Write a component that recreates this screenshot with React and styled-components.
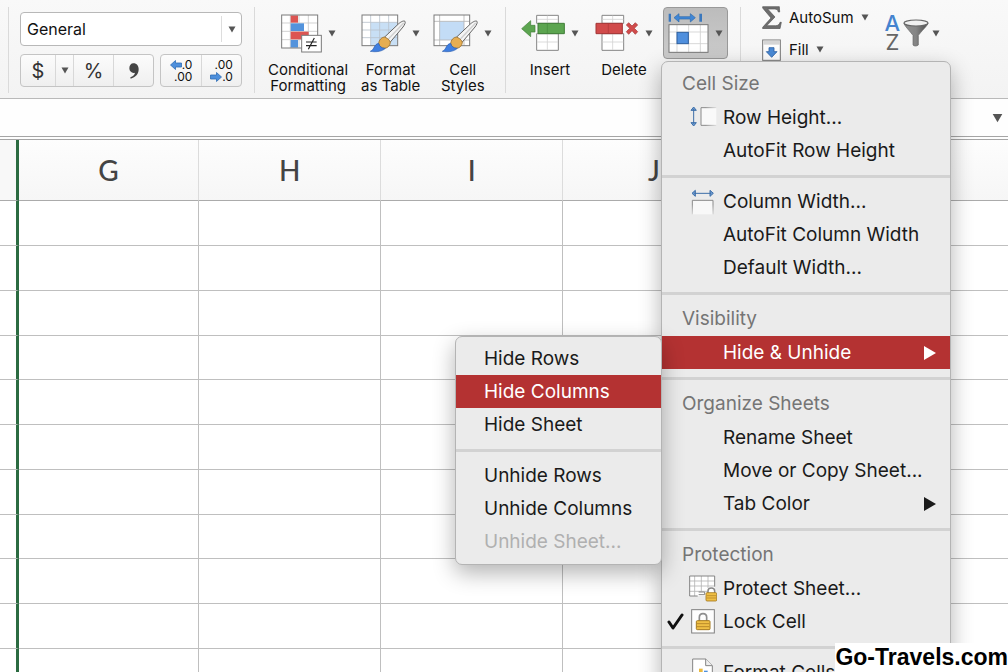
import { useState } from "react";
import styled, { createGlobalStyle } from "styled-components";

const COLUMNS = ["G", "H", "I", "J", "K", "L"];
const ROWS = Array.from({ length: 12 }, (_, i) => i);

const HIDE_MENU = [
  { label: "Hide Rows" },
  { label: "Hide Columns" },
  { label: "Hide Sheet" },
  { separator: true },
  { label: "Unhide Rows" },
  { label: "Unhide Columns" },
  { label: "Unhide Sheet...", disabled: true },
];

const FORMAT_MENU = [
  { title: "Cell Size" },
  { label: "Row Height...", icon: <RowHeightIcon /> },
  { label: "AutoFit Row Height" },
  { separator: true },
  { label: "Column Width...", icon: <ColumnWidthIcon /> },
  { label: "AutoFit Column Width" },
  { label: "Default Width..." },
  { separator: true },
  { title: "Visibility" },
  { label: "Hide & Unhide", submenu: HIDE_MENU },
  { separator: true },
  { title: "Organize Sheets" },
  { label: "Rename Sheet" },
  { label: "Move or Copy Sheet..." },
  { label: "Tab Color", submenu: [] },
  { separator: true },
  { title: "Protection" },
  { label: "Protect Sheet...", icon: <ProtectSheetIcon /> },
  { label: "Lock Cell", icon: <LockCellIcon />, checked: true },
  { separator: true },
  { label: "Format Cells...", icon: <FormatCellsIcon /> },
];

function Caret({ size = 8 }) {
  return (
    <svg width={size} height={size - 1} viewBox="0 0 8 7" aria-hidden="true">
      <path d="M0.5 0.5h7L4 6.5z" fill="#555" />
    </svg>
  );
}

function CommaIcon() {
  return (
    <svg width="12" height="18" viewBox="0 0 36 54" aria-hidden="true">
      <path
        d="M16 4C27 4 32 12 32 22c0 14-9 24-24 28l-1-4c8-3 13-8 14-14-8 3-17-3-17-13C4 10 9 4 16 4z"
        fill="#444"
      />
    </svg>
  );
}

function BlueArrow({ flip }) {
  return (
    <svg width="12" height="10" viewBox="0 0 12 10" aria-hidden="true">
      <path
        d={
          flip
            ? "M11.5 5L6.5 0.5v2.5h-6v4h6v2.5z"
            : "M0.5 5L5.5 0.5v2.5h6v4h-6v2.5z"
        }
        fill="#4d8fdc"
        stroke="#2f6db5"
        strokeWidth="0.8"
      />
    </svg>
  );
}

function ConditionalIcon() {
  return (
    <svg width="41" height="39" viewBox="75 44 123 117" aria-hidden="true">
      <rect x="77" y="47" width="108" height="99" fill="#fff" />
      <path
        d="M103 47v99M129 47v99M157 47v99M77 71h108M77 96h108M77 121h108"
        stroke="#c9c9c9"
        strokeWidth="2.5"
      />
      <path d="M104 48h22v22h-22z" fill="#dc5552" />
      <path d="M104 72h40v23h-40z" fill="#5393dc" />
      <path d="M104 97h54v23h-54z" fill="#dc5552" />
      <path d="M104 122h22v23h-22z" fill="#5393dc" />
      <rect
        x="77"
        y="47"
        width="108"
        height="99"
        fill="none"
        stroke="#7b7b7b"
        strokeWidth="3"
      />
      <rect
        x="137"
        y="108"
        width="59"
        height="50"
        fill="#fff"
        stroke="#7b7b7b"
        strokeWidth="3"
      />
      <path
        d="M150 128h32M150 139h32M175 116l-18 34"
        stroke="#222"
        strokeWidth="3.5"
        fill="none"
      />
    </svg>
  );
}

function Brush() {
  return (
    <g>
      <path
        d="M446 70c2 4-1 10-6 17l-38 45-18-14 40-38c8-8 17-13 22-10z"
        fill="#f4f4f4"
        stroke="#666"
        strokeWidth="3"
      />
      <path d="M442 75l-48 50" stroke="#cfcfcf" strokeWidth="4" />
      <path
        d="M384 117c6 1 16 9 18 15 0 10-7 18-17 19-10 0-17-7-18-15 1-10 8-18 17-19z"
        fill="#e6ae52"
        stroke="#9a7133"
        strokeWidth="2.5"
      />
      <path
        d="M367 136c2 9 9 15 20 15-9 9-26 12-45 9 12-4 11-22 25-24z"
        fill="#3f7fe0"
        stroke="#2a5db0"
        strokeWidth="2"
      />
    </g>
  );
}

function FormatTableIcon() {
  return (
    <svg width="45" height="39" viewBox="314 48 135 117" aria-hidden="true">
      <rect x="317" y="51" width="107" height="92" fill="#fff" />
      <path d="M343 73h81v70h-81z" fill="#c8dff5" />
      <path
        d="M343 51v92M370 51v92M397 51v92M317 73h107M317 96h107M317 119h107"
        stroke="#b9c3cc"
        strokeWidth="2.5"
      />
      <rect
        x="317"
        y="51"
        width="107"
        height="92"
        fill="none"
        stroke="#7b7b7b"
        strokeWidth="3"
      />
      <Brush />
    </svg>
  );
}

function CellStylesIcon() {
  return (
    <svg width="45" height="39" viewBox="314 48 135 117" aria-hidden="true">
      <rect x="317" y="51" width="107" height="92" fill="#fff" />
      <path d="M334 70h73v56h-73z" fill="#c3dcf6" />
      <path
        d="M334 51v92M407 51v92M317 70h107M317 126h107"
        stroke="#b5b5b5"
        strokeWidth="2.5"
      />
      <rect
        x="317"
        y="51"
        width="107"
        height="92"
        fill="none"
        stroke="#7b7b7b"
        strokeWidth="3"
      />
      <Brush />
    </svg>
  );
}

function InsertIcon() {
  return (
    <svg width="44" height="39" viewBox="62 42 132 117" aria-hidden="true">
      <path
        d="M109 46h65v24h-65zM109 101h65v50h-65z"
        fill="#fff"
        stroke="#858585"
        strokeWidth="3"
      />
      <path
        d="M141 47v22M141 102v48M110 126h63M110 58h63"
        stroke="#d4d4d4"
        strokeWidth="2.5"
      />
      <path
        d="M113 70h79v31h-79z"
        fill="#5ca550"
        stroke="#3f7d37"
        strokeWidth="3"
      />
      <path d="M141 71v29" stroke="#4b9040" strokeWidth="2.5" />
      <path
        d="M64 86l27-24v14h13v20H91v14z"
        fill="#5ca550"
        stroke="#3f7d37"
        strokeWidth="2"
      />
    </svg>
  );
}

function DeleteIcon() {
  return (
    <svg width="44" height="39" viewBox="284 42 132 117" aria-hidden="true">
      <path
        d="M305 46h65v24h-65zM305 101h65v50h-65z"
        fill="#fff"
        stroke="#858585"
        strokeWidth="3"
      />
      <path
        d="M337 47v22M337 102v48M306 126h63M306 58h63"
        stroke="#d4d4d4"
        strokeWidth="2.5"
      />
      <path
        d="M287 70h79v31h-79z"
        fill="#d14b4b"
        stroke="#a33434"
        strokeWidth="3"
      />
      <path d="M324 71v29" stroke="#b53c3c" strokeWidth="2.5" />
      <path
        d="M378 75l7-7 10 10 10-10 7 7-10 10 10 10-7 8-10-11-10 11-7-8 10-10z"
        fill="#d14b4b"
        stroke="#a33434"
        strokeWidth="2"
      />
    </svg>
  );
}

function FormatIcon() {
  return (
    <svg width="41" height="40" viewBox="503 37 123 120" aria-hidden="true">
      <path d="M505 39h7v24h-7zM597 39h8v24h-8z" fill="#3b78bd" />
      <path
        d="M521 51l15-12v9h34v-9l15 12-15 13v-9h-34v9z"
        fill="#3f86d6"
        stroke="#2f69aa"
        strokeWidth="2"
      />
      <rect x="506" y="72" width="117" height="83" fill="#fff" />
      <path
        d="M530 73v81M565 73v81M600 73v81M507 94h115M507 129h115"
        stroke="#d0d0d0"
        strokeWidth="2.5"
      />
      <rect
        x="506"
        y="72"
        width="117"
        height="83"
        fill="none"
        stroke="#777"
        strokeWidth="3"
      />
      <rect
        x="530"
        y="95"
        width="34"
        height="34"
        fill="#4f8fdd"
        stroke="#2c5f9f"
        strokeWidth="3"
      />
    </svg>
  );
}

function SigmaIcon() {
  return (
    <svg width="20" height="23" viewBox="32 18 60 69" aria-hidden="true">
      <path
        d="M34 20h50l1 16h-4c-2-7-5-9-11-9H49l22 24-25 26h27c7 0 11-3 13-10h4l-4 19H34v-4l25-28-25-30z"
        fill="#6d6d6d"
        stroke="#555"
        strokeWidth="2"
      />
    </svg>
  );
}

function FillIcon() {
  return (
    <svg width="20" height="22" viewBox="30 116 60 66" aria-hidden="true">
      <rect
        x="32"
        y="119"
        width="53"
        height="61"
        fill="#fdfdfd"
        stroke="#777"
        strokeWidth="3"
      />
      <path d="M34 121h50v12H34z" fill="#d5d5d5" />
      <path
        d="M51 142h15v12h9l-16 17-16-17h8z"
        fill="#4a8ad6"
        stroke="#2c61a5"
        strokeWidth="2.5"
      />
    </svg>
  );
}

function FunnelIcon() {
  return (
    <svg width="26" height="28" viewBox="456 59 78 84" aria-hidden="true">
      <defs>
        <linearGradient id="funnel" x1="0" x2="1">
          <stop offset="0" stopColor="#8f8f8f" />
          <stop offset="0.5" stopColor="#858585" />
          <stop offset="1" stopColor="#4c4c4c" />
        </linearGradient>
      </defs>
      <path
        d="M459 71c0 6 9 15 27 37v29c3 4 12 4 16 0v-29c18-22 29-31 29-37z"
        fill="url(#funnel)"
        stroke="#666"
        strokeWidth="2"
      />
      <ellipse
        cx="495"
        cy="71"
        rx="36"
        ry="9"
        fill="#f0f0f0"
        stroke="#666"
        strokeWidth="3.5"
      />
    </svg>
  );
}

function RowHeightIcon() {
  return (
    <svg width="28" height="24" viewBox="88 137 84 72" aria-hidden="true">
      <defs>
        <linearGradient id="rowFade" x1="0" x2="1">
          <stop offset="0.3" stopColor="#8a8a8a" />
          <stop offset="1" stopColor="#8a8a8a" stopOpacity="0.2" />
        </linearGradient>
      </defs>
      <path d="M124 142h46v53h-46z" fill="#f9f9f9" />
      <path
        d="M170 142h-46v53h46"
        fill="none"
        stroke="url(#rowFade)"
        strokeWidth="3"
      />
      <path
        d="M102 146v44M94 150l8-10 8 10zM94 187l8 10 8-10z"
        fill="#6d9bd0"
        stroke="#3d6ea8"
        strokeWidth="3"
      />
    </svg>
  );
}

function ColumnWidthIcon() {
  return (
    <svg width="28" height="28" viewBox="88 382 84 84" aria-hidden="true">
      <defs>
        <linearGradient id="colFade" x1="0" x2="0" y1="0" y2="1">
          <stop offset="0.3" stopColor="#8a8a8a" />
          <stop offset="1" stopColor="#8a8a8a" stopOpacity="0.3" />
        </linearGradient>
      </defs>
      <path d="M98 419h62v42H98z" fill="#f8f8f8" />
      <path
        d="M98 461v-42h62v42"
        fill="none"
        stroke="url(#colFade)"
        strokeWidth="3"
      />
      <path
        d="M104 398h50M107 389l-10 9 10 9zM151 389l10 9-10 9z"
        fill="#6d9bd0"
        stroke="#3d6ea8"
        strokeWidth="3"
      />
    </svg>
  );
}

function Padlock() {
  return (
    <g>
      <path
        d="M144 276v-7c0-12 20-12 20 0v7"
        fill="none"
        stroke="#888"
        strokeWidth="4.5"
      />
      <rect
        x="138"
        y="274"
        width="32"
        height="25"
        rx="3"
        fill="#efbf45"
        stroke="#a57a1e"
        strokeWidth="2.5"
      />
      <path d="M140 283h28M140 290h28" stroke="#b98a2a" strokeWidth="2.5" />
    </g>
  );
}

function ProtectSheetIcon() {
  return (
    <svg width="28" height="28" viewBox="87 221 84 84" aria-hidden="true">
      <path d="M89 224h75v60H89z" fill="#fff" />
      <path
        d="M104 224v60M124 224v46M144 224v36M89 239h75M89 254h75M89 270h55"
        stroke="#b4b4b4"
        strokeWidth="2.5"
      />
      <path
        d="M164 256v-32H89v60h24M116 272h18v8h-18"
        fill="none"
        stroke="#848484"
        strokeWidth="3"
      />
      <Padlock />
    </svg>
  );
}

function LockCellIcon() {
  return (
    <svg width="28" height="26" viewBox="87 322 84 78" aria-hidden="true">
      <rect
        x="95"
        y="324"
        width="68"
        height="70"
        fill="#fdfdfd"
        stroke="#808080"
        strokeWidth="3"
      />
      <path
        d="M118 359v-12c0-15 22-15 22 0v12"
        fill="none"
        stroke="#8d8d8d"
        strokeWidth="5"
      />
      <rect
        x="109"
        y="357"
        width="41"
        height="27"
        rx="3"
        fill="#efbf45"
        stroke="#a57a1e"
        strokeWidth="3"
      />
      <path d="M111 366h37M111 375h37" stroke="#b98a2a" strokeWidth="3" />
    </svg>
  );
}

function FormatCellsIcon() {
  return (
    <svg width="28" height="30" viewBox="87 468 84 90" aria-hidden="true">
      <path
        d="M98 471h39l20 20v60H98z"
        fill="#fff"
        stroke="#848484"
        strokeWidth="3"
      />
      <path d="M137 471v20h20" fill="#eee" stroke="#848484" strokeWidth="3" />
      <path d="M104 511h10v24h-10z" fill="#4d8fdc" />
      <path d="M117 500h11v35h-11z" fill="#e9b93f" />
      <path d="M132 506h11v29h-11z" fill="#4d8fdc" />
      <path d="M146 510l20 6-8 22h-12z" fill="#6d7480" />
    </svg>
  );
}

function CheckIcon() {
  return (
    <svg width="17" height="18" viewBox="0 0 17 18" aria-hidden="true">
      <path
        d="M2 9l4 6L15 2"
        fill="none"
        stroke="#111"
        strokeWidth="3"
        strokeLinecap="round"
        strokeLinejoin="round"
      />
    </svg>
  );
}

function SubmenuArrow() {
  return (
    <svg width="14" height="14" viewBox="0 0 14 14" aria-hidden="true">
      <path d="M1 0l12 7-12 7z" fill="currentColor" />
    </svg>
  );
}

function RibbonButton({ icon, lines }) {
  return (
    <BigButton type="button">
      <IconLine>
        {icon}
        <Caret />
      </IconLine>
      {lines.map((line) => (
        <span key={line}>{line}</span>
      ))}
    </BigButton>
  );
}

function HideSubmenu({ entries }) {
  const [active, setActive] = useState("Hide Columns");

  return (
    <Submenu role="menu" aria-label="Hide & Unhide">
      {entries.map((entry, i) =>
        entry.separator ? (
          <Separator key={i} />
        ) : (
          <SubmenuItem
            key={entry.label}
            type="button"
            role="menuitem"
            disabled={entry.disabled}
            $active={entry.label === active}
            onMouseEnter={() => setActive(entry.label)}
          >
            {entry.label}
          </SubmenuItem>
        )
      )}
    </Submenu>
  );
}

function FormatMenu() {
  const [active, setActive] = useState("Hide & Unhide");

  return (
    <Menu role="menu" aria-label="Format">
      {FORMAT_MENU.map((entry, i) => {
        if (entry.separator) return <Separator key={i} />;
        if (entry.title) return <MenuTitle key={i}>{entry.title}</MenuTitle>;
        const isActive = entry.label === active;
        return (
          <ItemWrapper key={entry.label}>
            <MenuItem
              type="button"
              role="menuitem"
              $active={isActive}
              onClick={() => setActive(entry.label)}
            >
              <span>{entry.checked && <CheckIcon />}</span>
              <span>{entry.icon}</span>
              <ItemLabel>{entry.label}</ItemLabel>
              {entry.submenu && <SubmenuArrow />}
            </MenuItem>
            {isActive && entry.submenu?.length > 0 && (
              <HideSubmenu entries={entry.submenu} />
            )}
          </ItemWrapper>
        );
      })}
    </Menu>
  );
}

export default function App() {
  const [open, setOpen] = useState(true);

  return (
    <>
      <GlobalStyle />
      <Page>
        <Ribbon>
          <NumberGroup>
            <SelectBox>
              <select aria-label="Number format" defaultValue="General">
                <option>General</option>
                <option>Number</option>
                <option>Currency</option>
              </select>
              <SelectCaret>
                <Caret />
              </SelectCaret>
            </SelectBox>
            <ButtonLine>
              <Segments>
                <Segment type="button" $width={34} aria-label="Currency">
                  $
                </Segment>
                <Segment type="button" $width={18} aria-label="More currencies">
                  <Caret />
                </Segment>
                <Segment type="button" $width={40} aria-label="Percent">
                  %
                </Segment>
                <Segment type="button" $width={40} aria-label="Comma style">
                  <CommaIcon />
                </Segment>
              </Segments>
              <Segments>
                <Segment type="button" $width={40}>
                  <Decimals>
                    <span>
                      <BlueArrow />
                      .0
                    </span>
                    <span>.00</span>
                  </Decimals>
                </Segment>
                <Segment type="button" $width={40}>
                  <Decimals>
                    <span>.00</span>
                    <span>
                      <BlueArrow flip />
                      .0
                    </span>
                  </Decimals>
                </Segment>
              </Segments>
            </ButtonLine>
          </NumberGroup>

          <StylesGroup>
            <RibbonButton
              icon={<ConditionalIcon />}
              lines={["Conditional", "Formatting"]}
            />
            <RibbonButton
              icon={<FormatTableIcon />}
              lines={["Format", "as Table"]}
            />
            <RibbonButton icon={<CellStylesIcon />} lines={["Cell", "Styles"]} />
          </StylesGroup>

          <CellsGroup>
            <RibbonButton icon={<InsertIcon />} lines={["Insert"]} />
            <RibbonButton icon={<DeleteIcon />} lines={["Delete"]} />
            <Dropdown>
              <FormatButton
                type="button"
                aria-label="Format"
                aria-expanded={open}
                onClick={() => setOpen(!open)}
              >
                <FormatIcon />
                <Caret />
              </FormatButton>
              {open && <FormatMenu />}
            </Dropdown>
          </CellsGroup>

          <EditingGroup>
            <SmallButtons>
              <SmallButton type="button">
                <SigmaIcon />
                AutoSum
                <Caret />
              </SmallButton>
              <SmallButton type="button">
                <FillIcon />
                Fill
                <Caret />
              </SmallButton>
            </SmallButtons>
            <SortButton type="button" aria-label="Sort and filter">
              <SortLetters>
                <b>A</b>
                <span>Z</span>
              </SortLetters>
              <FunnelIcon />
              <Caret />
            </SortButton>
          </EditingGroup>
        </Ribbon>

        <FormulaBar>
          <FormulaInput type="text" aria-label="Formula" />
          <ExpandButton type="button" aria-label="Expand formula bar">
            <Caret size={11} />
          </ExpandButton>
        </FormulaBar>

        <Sheet>
          <thead>
            <tr>
              <EdgeHeader aria-label="F" />
              {COLUMNS.map((name) => (
                <ColumnHeader key={name} scope="col">
                  {name}
                </ColumnHeader>
              ))}
            </tr>
          </thead>
          <tbody>
            {ROWS.map((row) => (
              <Row key={row}>
                <EdgeCell />
                {COLUMNS.map((name) => (
                  <Cell key={name} />
                ))}
              </Row>
            ))}
          </tbody>
        </Sheet>

        <Watermark>Go-Travels.com</Watermark>
      </Page>
    </>
  );
}

const GlobalStyle = createGlobalStyle`
  * {
    box-sizing: border-box;
  }

  body {
    margin: 0;
    font-family: Inter, "Liberation Sans", sans-serif;
    color: #111;
  }

  button,
  input,
  select {
    font: inherit;
    color: inherit;
    border: 0;
    padding: 0;
    margin: 0;
    background: none;
  }

  svg {
    display: block;
    flex-shrink: 0;
  }
`;

const Page = styled.div`
  position: relative;
  height: 100vh;
  overflow: hidden;
  background: #fff;
`;

const Ribbon = styled.header`
  display: flex;
  height: 99px;
  padding: 7px 0 5px 8px;
  background: linear-gradient(#f9f9f9, #f3f3f3);
  border-bottom: 1px solid #b9b9b9;
`;

const Group = styled.section`
  display: flex;
  flex-shrink: 0;
  align-items: flex-start;
  border-left: 1px solid #dadada;
`;

const NumberGroup = styled(Group)`
  flex-direction: column;
  gap: 8px;
  width: 246px;
  padding: 5px 12px 0 11px;
`;

const SelectBox = styled.div`
  display: flex;
  align-items: center;
  width: 100%;
  height: 34px;
  background: #fff;
  border: 1px solid #b8b8b8;
  border-radius: 4px;

  select {
    flex: 1;
    height: 100%;
    padding-left: 6px;
    appearance: none;
    outline: none;
    font-size: 16px;
  }
`;

const SelectCaret = styled.span`
  display: flex;
  align-items: center;
  justify-content: center;
  width: 20px;
  height: 26px;
  border-left: 1px solid #ddd;
  pointer-events: none;
`;

const ButtonLine = styled.div`
  display: flex;
  justify-content: space-between;
  width: 100%;
`;

const Segments = styled.div`
  display: flex;
  height: 33px;
  background: linear-gradient(#fcfcfc, #efefef);
  border: 1px solid #c4c4c4;
  border-radius: 4px;
`;

const Segment = styled.button`
  display: flex;
  align-items: center;
  justify-content: center;
  width: ${(props) => props.$width}px;
  font-size: 20px;
  color: #333;

  & + & {
    border-left: 1px solid #d8d8d8;
  }
`;

const Decimals = styled.span`
  display: flex;
  flex-direction: column;
  align-items: flex-end;
  font-size: 12px;
  line-height: 12px;
  color: #111;

  span {
    display: flex;
    align-items: center;
  }
`;

const StylesGroup = styled(Group)`
  gap: 13px;
  width: 251px;
  padding-left: 13px;
`;

const CellsGroup = styled(Group)`
  width: 235px;
  padding-left: 15px;

  > button + button {
    margin-left: 16px;
  }
`;

const EditingGroup = styled(Group)`
  flex: 1;
  gap: 16px;
  padding-left: 21px;
`;

const BigButton = styled.button`
  display: flex;
  flex-direction: column;
  align-items: center;
  padding-top: 7px;
  font-size: 15px;
  line-height: 16px;
`;

const IconLine = styled.span`
  display: flex;
  align-items: center;
  gap: 6px;
  margin-bottom: 9px;
`;

const Dropdown = styled.div`
  position: relative;
  margin-left: 10px;
`;

const FormatButton = styled.button`
  display: flex;
  align-items: center;
  justify-content: space-between;
  width: 65px;
  height: 52px;
  padding: 0 4px;
  background: linear-gradient(#bcbcbc, #cbcbcb);
  border: 1px solid #999;
  border-radius: 4px;
`;

const SmallButtons = styled.div`
  display: flex;
  flex-direction: column;
  align-items: flex-start;
  gap: 11px;
`;

const SmallButton = styled.button`
  display: flex;
  align-items: center;
  gap: 7px;
  height: 21px;
  font-size: 15px;
`;

const SortButton = styled.button`
  display: flex;
  align-items: center;
  gap: 3px;
  padding-top: 7px;
`;

const SortLetters = styled.span`
  display: flex;
  flex-direction: column;
  align-items: center;
  font-size: 22px;
  line-height: 19px;
  color: #666;

  b {
    font-weight: 500;
    color: #4583cf;
  }
`;

const FormulaBar = styled.div`
  display: flex;
  height: 41px;
  padding-right: 5px;
  background: #fefefe;
  border-bottom: 4px double #a5a5a5;
`;

const FormulaInput = styled.input`
  flex: 1;
  padding: 0 10px;
  outline: none;
`;

const ExpandButton = styled.button`
  width: 11px;
`;

const Sheet = styled.table`
  width: 1110px;
  table-layout: fixed;
  border-collapse: separate;
  border-spacing: 0;
`;

const EdgeHeader = styled.th`
  width: 19px;
  height: 61px;
  background: #f8f8f8;
  border-right: 3px solid #2b6b41;
  border-bottom: 1px solid #ababab;
`;

const ColumnHeader = styled.th`
  padding: 0;
  background: linear-gradient(#fdfdfd, #f6f6f6);
  border-right: 1px solid #dcdcdc;
  border-bottom: 1px solid #ababab;
  font-family: Lato, Inter, sans-serif;
  font-size: 28px;
  font-weight: 500;
  color: #444;

  &:nth-child(2) {
    width: 180px;
  }
`;

const Cell = styled.td`
  padding: 0;
  border-right: 1px solid #bfbfbf;
  border-bottom: 1px solid #bfbfbf;
`;

const EdgeCell = styled(Cell)`
  border-right: 3px solid #2b6b41;
`;

const Row = styled.tr`
  height: 45px;

  &:nth-child(4n) {
    height: 44px;
  }
`;

const menuPanel = `
  position: absolute;
  background: #ebebeb;
  border: 1px solid #b4b4b4;
  border-radius: 7px;
  box-shadow: 0 8px 22px rgba(0, 0, 0, 0.3);
`;

const Menu = styled.div`
  ${menuPanel}
  z-index: 2;
  top: calc(100% + 2px);
  left: -2px;
  width: 290px;
  padding: 5px 0;
`;

const Submenu = styled.div`
  ${menuPanel}
  top: 0;
  right: 100%;
  width: 207px;
  padding: 5px 0 6px;
`;

const ItemWrapper = styled.div`
  position: relative;
`;

const MenuTitle = styled.div`
  height: 34px;
  padding-left: 20px;
  font-size: 19px;
  line-height: 34px;
  color: #757575;
`;

const MenuItem = styled.button`
  display: grid;
  grid-template-columns: 22px 28px 1fr auto;
  align-items: center;
  width: 100%;
  height: 33px;
  padding: 0 13px 0 5px;
  font-size: 19px;
  text-align: left;
  color: ${(props) => (props.$active ? "#fff" : "#1a1a1a")};
  background: ${(props) => (props.$active ? "#b43232" : "transparent")};
`;

const ItemLabel = styled.span`
  padding-left: 6px;
  white-space: nowrap;
`;

const SubmenuItem = styled.button`
  display: block;
  width: 100%;
  height: 33px;
  padding-left: 28px;
  font-size: 19px;
  text-align: left;
  color: ${(props) => (props.$active ? "#fff" : "#1a1a1a")};
  background: ${(props) => (props.$active ? "#b43232" : "transparent")};

  &:disabled {
    color: #b0b0b0;
  }
`;

const Separator = styled.hr`
  height: 18px;
  margin: 0;
  border: 0;
  background: linear-gradient(#d2d2d2, #d2d2d2) center / 100% 3px no-repeat;
`;

const Watermark = styled.div`
  position: absolute;
  z-index: 3;
  right: 0;
  bottom: 0;
  background: #fff;
  font-family: "Liberation Sans", Arial, sans-serif;
  font-size: 23px;
  font-weight: 700;
  line-height: 29px;
  color: #000;
`;
